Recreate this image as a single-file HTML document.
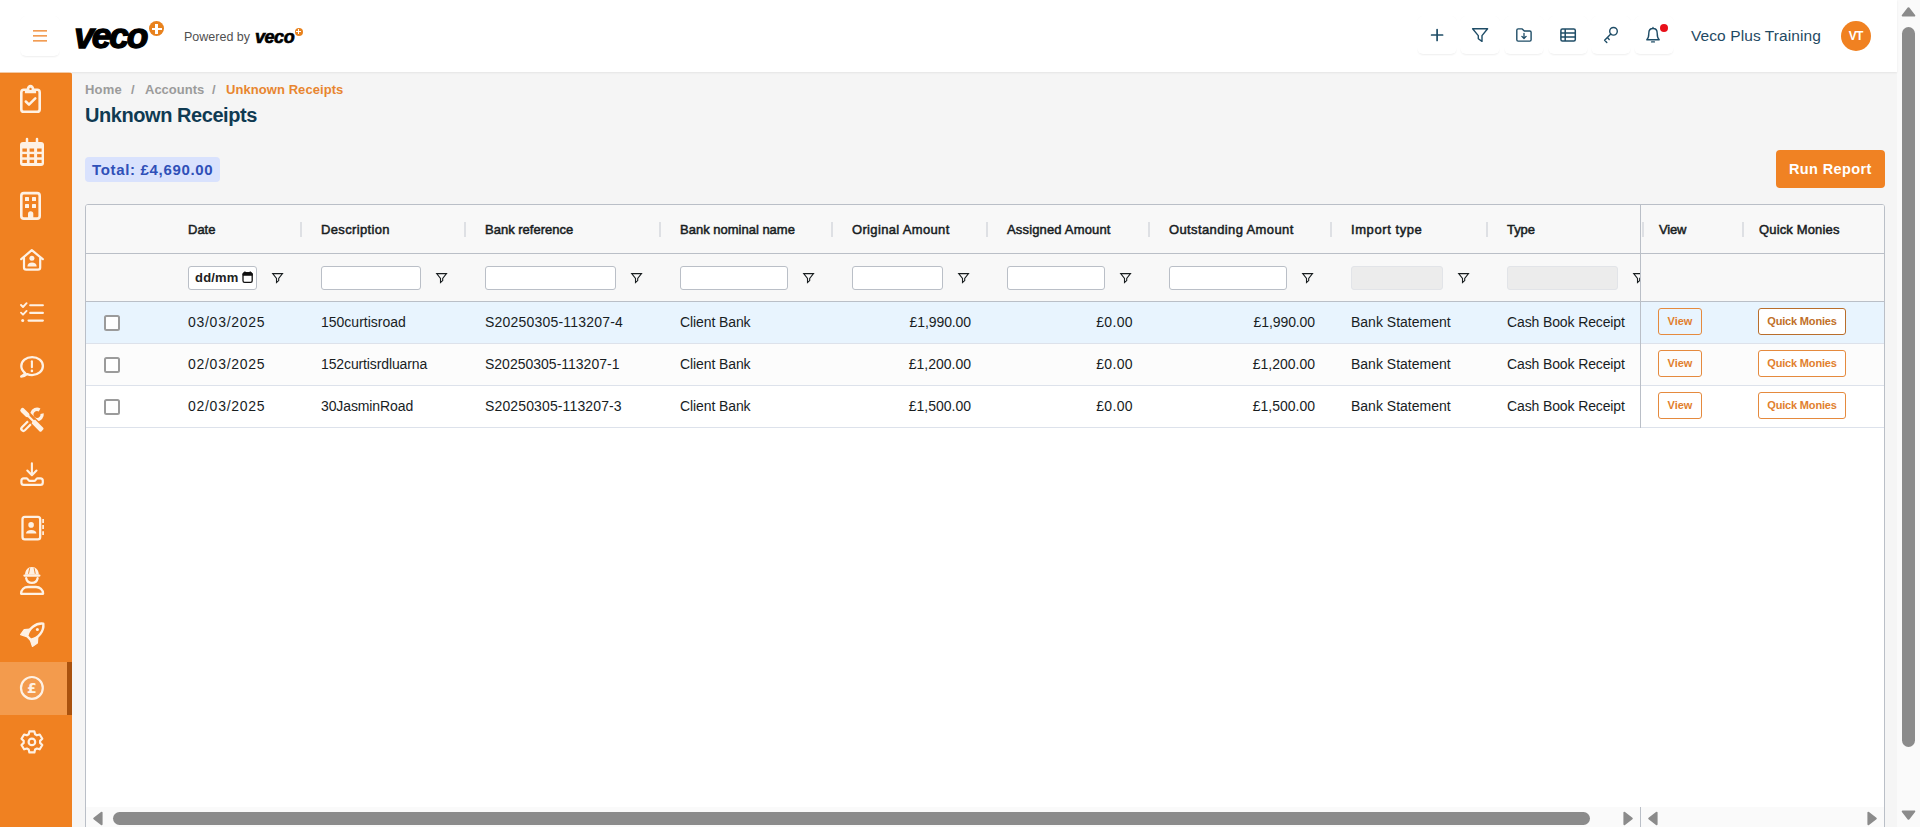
<!DOCTYPE html>
<html lang="en">
<head>
<meta charset="utf-8">
<title>Unknown Receipts</title>
<style>
*{box-sizing:border-box;margin:0;padding:0}
html,body{width:1920px;height:827px;overflow:hidden;background:#f5f5f5;font-family:"Liberation Sans",Arial,sans-serif;color:#181d1f}
#page{position:relative;width:1920px;height:827px;overflow:hidden}
#page div,#page span,#page svg{position:absolute;white-space:pre}
/* header */
#hdr{left:0;top:0;width:1897px;height:72px;background:#fff;z-index:3;box-shadow:0 1px 2px rgba(0,0,0,.07)}
.hbtn{width:40px;height:38px;top:16px;border-radius:6px;background:#fff;box-shadow:0 2px 2px -1px rgba(0,0,0,.07),0 0 1px rgba(0,0,0,.03)}
/* sidebar */
#side{left:0;top:72px;width:72px;height:755px;background:#f08121;border-top-right-radius:3px}
#side .act{left:0;top:590px;width:72px;height:53px;background:#f39b4d}
#side .bar{left:67px;top:590px;width:5px;height:53px;background:#a9520e}
/* table */
#grid{left:85px;top:204px;width:1800px;height:640px;border:1px solid #babfc7;border-radius:3px;background:#fff;overflow:hidden}
.hd{font-weight:400;-webkit-text-stroke:.5px #181d1f;font-size:13px;line-height:16px;top:17px;color:#181d1f}
.sep{width:2px;height:15px;top:17px;background:rgba(186,191,199,.42)}
.fi{top:61px;height:24px;border:1px solid #babfc7;border-radius:3px;background:#fff}
.fi.dis{background:#ececec;border-color:#e2e4e8}
.c{font-size:14px;line-height:18px;color:#181d1f}
.r{text-align:right}
.cb{width:16px;height:16px;left:18px;border:2px solid #9b9b9b;border-radius:2.5px;background:#fff}
.btn{height:27px;border:1px solid #e58a3e;border-radius:3px;font-size:11px;font-weight:700;line-height:24px;text-align:center;color:#e17f2e}
.btn.q{background:#fff;letter-spacing:-.18px}
.btn.q.hv{color:#c06f28;border-color:#b96e2c}
</style>
</head>
<body>
<div id="page">
<!-- HEADER -->
<div id="hdr">
  <div style="left:0;top:72px;width:72px;height:1px;background:rgba(255,255,255,.6)"></div>
  <div class="hbtn" style="left:20px;top:16px;width:40px;height:40px"></div>
  <svg style="left:30px;top:26px" width="20" height="20" viewBox="30 26 20 20"><path d="M33 30.9H47M33 35.8H47M33 40.9H47" stroke="#ee7d1c" stroke-width="1.2" fill="none"/></svg>
  <span id="logo" style="left:74.3px;top:15.8px;font-size:35.5px;line-height:40px;font-weight:700;font-style:italic;-webkit-text-stroke:1.3px #000;letter-spacing:-2.3px;color:#000">veco</span>
  <div style="left:149px;top:21px;width:15px;height:15px;border-radius:50%;background:#e8821e"></div>
  <div style="left:151.6px;top:27.5px;width:10px;height:2.8px;background:#fff"></div>
  <div style="left:155.2px;top:23.9px;width:2.8px;height:10px;background:#fff"></div>
  <span id="pw" style="left:184px;top:28.5px;font-size:12.5px;line-height:16px;color:#505050">Powered by</span>
  <span id="logo2" style="left:255px;top:25.5px;font-size:18px;line-height:22px;font-weight:700;font-style:italic;-webkit-text-stroke:.65px #000;letter-spacing:-.45px;color:#000">veco</span>
  <div style="left:294.8px;top:27.5px;width:8px;height:8px;border-radius:50%;background:#e8821e"></div>
  <div style="left:296.4px;top:30.9px;width:4.8px;height:1.3px;background:#fff"></div>
  <div style="left:298.15px;top:29.1px;width:1.3px;height:4.8px;background:#fff"></div>

  <div class="hbtn" style="left:1417px"></div>
  <div class="hbtn" style="left:1460px"></div>
  <div class="hbtn" style="left:1504px"></div>
  <div class="hbtn" style="left:1547.5px"></div>
  <div class="hbtn" style="left:1591px"></div>
  <div class="hbtn" style="left:1633.5px"></div>
  <svg style="left:1418px;top:16px" width="260" height="40" viewBox="1418 16 260 40" fill="none" stroke="#1f4d67" stroke-width="1.5" stroke-linecap="round" stroke-linejoin="round">
    <path d="M1431.6 35H1442.6M1437.1 29.5V40.5" stroke-width="1.7"/>
    <path d="M1472.6 28.7H1487.6L1482 35.6V41.4L1478.3 38.7V35.6Z" stroke-width="1.4"/>
    <path d="M1516.8 30.2Q1516.8 28.9 1518.1 28.9H1522.2L1524.3 31H1529.8Q1531.1 31 1531.1 32.3V39.8Q1531.1 41.1 1529.8 41.1H1518.1Q1516.8 41.1 1516.8 39.8Z" stroke-width="1.4"/>
    <path d="M1524 33.3V38.3M1521.9 36.4L1524 38.5L1526.1 36.4" stroke-width="1.3"/>
    <path d="M1560.9 30.4Q1560.9 28.9 1562.4 28.9H1573.8Q1575.3 28.9 1575.3 30.4V39.6Q1575.3 41.1 1573.8 41.1H1562.4Q1560.9 41.1 1560.9 39.6ZM1560.9 32.9H1575.3M1560.9 37H1575.3M1565.2 28.9V41.1" stroke-width="1.5"/>
    <circle cx="1613.5" cy="31.3" r="3.8" stroke-width="1.4"/>
    <path d="M1610.8 34L1604.6 40.2L1606.8 42.4M1607.4 37.6L1609.2 39.4" stroke-width="1.4"/>
    <path d="M1646.8 39.7H1659.2C1657.6 38.2 1657.2 36.6 1657.2 33.2C1657.2 30.3 1655.4 28.5 1653 28.5C1650.6 28.5 1648.8 30.3 1648.8 33.2C1648.8 36.6 1648.4 38.2 1646.8 39.7ZM1653 27.4V28.4M1651.6 41.9H1654.4" stroke-width="1.4"/>
  </svg>

  <div style="left:1660px;top:24px;width:8px;height:8px;border-radius:50%;background:#e8101a"></div>
  <span id="org" style="letter-spacing:0.09px;left:1691px;top:26px;font-size:15.5px;line-height:20px;color:#1f4a63">Veco Plus Training</span>
  <div style="left:1841px;top:21px;width:30px;height:30px;border-radius:50%;background:#f08121"></div>
  <span id="vt" style="left:1841px;top:28.8px;width:30px;text-align:center;font-size:12px;line-height:14px;font-weight:700;letter-spacing:-.6px;text-indent:-.6px;color:#fff">VT</span>
</div>
<!-- SIDEBAR -->
<div id="side">
  <div class="act"></div><div class="bar"></div>
  <svg style="left:0;top:0" width="72" height="755" viewBox="0 72 72 755" fill="none" stroke="#fef1e4" stroke-width="2.3" stroke-linecap="round" stroke-linejoin="round">
  <rect x="21.3" y="89.8" width="18.4" height="22" rx="2.6" stroke-width="2.6"/>
  <path d="M24.9 93.2V90.4Q24.9 89 26.3 89H26.7C26.9 86.4 28.5 84.8 30.5 84.8C32.5 84.8 34.1 86.4 34.3 89H34.7Q36.1 89 36.1 90.4V93.2Z" fill="#fef1e4" stroke="none"/>
  <circle cx="30.5" cy="88.9" r="1.2" fill="#f08121" stroke="none"/>
  <path d="M25.8 101.5L29 104.7L35.3 98.4" stroke-width="2.5"/>
  <rect x="20" y="142" width="24" height="24" rx="3" fill="#fef1e4" stroke="none"/>
  <path d="M27 139V143M37 139V143" stroke-width="2.5"/>
  <rect x="22.4" y="148.5" width="4.5" height="3.2" fill="#f08121" stroke="none"/>
  <rect x="22.4" y="154.1" width="4.5" height="3.2" fill="#f08121" stroke="none"/>
  <rect x="22.4" y="159.8" width="4.5" height="3.2" fill="#f08121" stroke="none"/>
  <rect x="29.6" y="148.5" width="4.5" height="3.2" fill="#f08121" stroke="none"/>
  <rect x="29.6" y="154.1" width="4.5" height="3.2" fill="#f08121" stroke="none"/>
  <rect x="29.6" y="159.8" width="4.5" height="3.2" fill="#f08121" stroke="none"/>
  <rect x="37.1" y="148.5" width="4.5" height="3.2" fill="#f08121" stroke="none"/>
  <rect x="37.1" y="154.1" width="4.5" height="3.2" fill="#f08121" stroke="none"/>
  <rect x="37.1" y="159.8" width="4.5" height="3.2" fill="#f08121" stroke="none"/>
  <rect x="21.3" y="193.1" width="18.4" height="25.5" rx="2.6" stroke-width="2.6"/>
  <rect x="25" y="196.9" width="4" height="4" rx=".5" fill="#fef1e4" stroke="none"/>
  <rect x="25" y="204.1" width="4" height="4" rx=".5" fill="#fef1e4" stroke="none"/>
  <rect x="32" y="196.9" width="4" height="4" rx=".5" fill="#fef1e4" stroke="none"/>
  <rect x="32" y="204.1" width="4" height="4" rx=".5" fill="#fef1e4" stroke="none"/>
  <path d="M28 219V213.8A2.65 2.65 0 0 1 33.3 213.8V219Z" fill="#fef1e4" stroke="none"/>
  <path d="M21.2 259.2L31.8 250.2L42.8 259.2M24 257.6V267.5Q24 269.7 26.2 269.7H38Q40.2 269.7 40.2 267.5V257.6" stroke-width="2.2"/>
  <circle cx="31.9" cy="258.3" r="2.5" fill="#fef1e4" stroke="none"/>
  <path d="M27.4 266.6C27.4 263.9 29.4 262.6 32 262.6C34.6 262.6 36.7 263.9 36.7 266.6Z" fill="#fef1e4" stroke="none"/>
  <path d="M30.2 305.3H42.9M30.2 312.9H42.9M28.5 320.6H42.9" stroke-width="2.1"/>
  <path d="M21 305L23 307L26.6 303.2M21 312.7L23 314.7L26.6 310.9" stroke-width="1.9"/>
  <circle cx="22.7" cy="320.6" r="1.5" fill="#fef1e4" stroke="none"/>
  <path d="M25.2 373.1C22.8 371.4 21.3 368.9 21.3 366.1C21.3 361.1 26.1 357.1 32.1 357.1C38.1 357.1 42.9 361.1 42.9 366.1C42.9 371.1 38.1 375.1 32.1 375.1C30.3 375.1 28.6 374.7 27.1 374.1C25.4 375.4 23.2 376.4 21.2 376.6C22.8 375.6 24.6 374.1 25.2 373.1Z" stroke-width="2.3"/>
  <path d="M31.9 361.2V367.2" stroke-width="2.1"/>
  <circle cx="31.9" cy="370.9" r="1.3" fill="#fef1e4" stroke="none"/>
  <path d="M23.4 428.8L30.2 422" stroke-width="6.4"/>
  <path d="M23.5 428.7L30.3 421.9" stroke="#f08121" stroke-width="2"/>
  <path d="M39.6 410A5.2 5.2 0 1 0 42.1 413.6" stroke-width="3.3" stroke-linecap="butt"/>
  <path d="M22.6 410.3L41 429" stroke="#f08121" stroke-width="7.5" stroke-linecap="butt"/>
  <path d="M22.6 410.3L27.2 414.9" stroke-width="4.6"/>
  <path d="M27 414.7L34 421.7" stroke-width="2.2"/>
  <path d="M32.6 421.4L35 419.6L43.2 427.8Q44 428.8 43.2 429.6L41.4 431.4Q40.6 432.2 39.6 431.4L31.6 423.2Z" fill="#fef1e4" stroke="none"/>
  <path d="M31.9 463.2V475M27.3 470.6L31.9 475.2L36.5 470.6" stroke-width="2.1"/>
  <path d="M23.8 478.3H26.6C28 478.3 28 480.9 29.6 480.9H34.4C36 480.9 36 478.3 37.4 478.3H40.4Q42.8 478.3 42.8 480.7V482.4Q42.8 484.8 40.4 484.8H23.8Q21.4 484.8 21.4 482.4V480.7Q21.4 478.3 23.8 478.3Z" stroke-width="2.2"/>
  <rect x="22.5" y="516.8" width="17.7" height="22.5" rx="2.4" stroke-width="2.3"/>
  <path d="M43.1 519.1V523M43.1 525.1V529M43.1 531.2V535" stroke-width="1.7" stroke-linecap="butt"/>
  <circle cx="31.1" cy="524.9" r="2.8" fill="#fef1e4" stroke="none"/>
  <path d="M26 533.6C26 531.2 28 530 31.2 530C34.4 530 36.4 531.2 36.4 533.6Z" fill="#fef1e4" stroke="none"/>
  <path d="M25 574.8C25 570.2 27.8 567 31.9 567C36 567 38.8 570.2 38.8 574.8Z" fill="#fef1e4" stroke="none"/>
  <path d="M29.6 568.6L28.6 573.4M34.2 568.6L35.2 573.4" stroke="#f08121" stroke-width=".9"/>
  <path d="M24.4 575.6H39.4" stroke-width="2.2"/>
  <path d="M26.2 578.2A5.8 5.8 0 0 0 37.6 578.2" stroke-width="2.3"/>
  <path d="M21.1 593.8C21.1 589.6 24.2 587 28 587H36C39.8 587 43.1 589.6 43.1 593.8Z" stroke-width="2.3"/>
  <path d="M43.3 623.6C35.6 622.8 28.6 628.6 27.2 636.2L30.8 639.8C38.4 638.4 44.2 631.4 43.3 623.6Z" stroke-width="2.4"/>
  <circle cx="37.4" cy="629.5" r="1.5" fill="#fef1e4" stroke="none"/>
  <path d="M30 629.2L24.2 629.6L20.6 634.6L26.6 636.6Z" fill="#fef1e4" stroke="#fef1e4" stroke-width="1.2"/>
  <path d="M37.8 637.2L37.4 643L32.4 646.4L30.4 640.4Z" fill="#fef1e4" stroke="#fef1e4" stroke-width="1.2"/>
  <circle cx="31.9" cy="687.9" r="10.9" stroke-width="2.2"/>
  <text x="31.9" y="692.9" text-anchor="middle" font-family="DejaVu Sans,Liberation Sans,sans-serif" font-size="14" font-weight="700" fill="#fef1e4" stroke="none">£</text>
  <path d="M35.1 734.3L34.4 731.4L29.4 731.4L28.7 734.3L26.9 735.3L24.1 734.5L21.5 738.8L23.7 740.9L23.7 742.9L21.5 745.0L24.1 749.3L26.9 748.5L28.7 749.5L29.4 752.4L34.4 752.4L35.1 749.5L36.9 748.5L39.7 749.3L42.3 745.0L40.1 742.9L40.1 740.9L42.3 738.8L39.7 734.5L36.9 735.3Z" stroke-width="2.2"/>
  <circle cx="31.9" cy="741.9" r="3.3" stroke-width="2.2"/>
  </svg>
</div>
<!-- MAIN -->
<span id="bc1" style="letter-spacing:0.20px;margin-top:.5px;left:85px;top:81px;font-size:13px;line-height:16px;font-weight:700;color:#9b9b9b">Home</span>
<span id="bcs1" style="margin-top:.5px;left:131px;top:81px;font-size:13px;line-height:16px;font-weight:700;color:#9b9b9b">/</span>
<span id="bc2" style="margin-top:.5px;left:145px;top:81px;font-size:13px;line-height:16px;font-weight:700;color:#9b9b9b">Accounts</span>
<span id="bcs2" style="margin-top:.5px;left:212px;top:81px;font-size:13px;line-height:16px;font-weight:700;color:#9b9b9b">/</span>
<span id="bc3" style="letter-spacing:0.07px;margin-top:.5px;left:226px;top:81px;font-size:13px;line-height:16px;font-weight:700;color:#e8852f">Unknown Receipts</span>
<span id="ttl" style="letter-spacing:-0.44px;left:85px;top:103px;font-size:20px;line-height:24px;font-weight:700;color:#0f3a52">Unknown Receipts</span>
<div style="left:85px;top:157px;width:135px;height:25px;border-radius:4px;background:#d9e2fd"></div>
<span id="tot" style="letter-spacing:0.67px;left:92px;top:160px;font-size:15px;line-height:19px;font-weight:700;color:#2f50b8">Total: £4,690.00</span>
<div style="left:1776px;top:150px;width:109px;height:38px;border-radius:4px;background:#f08223"></div>
<span id="rr" style="letter-spacing:0.37px;left:1789px;top:159.5px;font-size:14.5px;line-height:19px;font-weight:700;color:#fff">Run Report</span>

<!-- GRID -->
<div id="grid">
  <div style="left:0;top:0;width:1798px;height:96px;background:#f8f8f8"></div>
  <div style="left:0;top:48px;width:1798px;height:1px;background:#babfc7"></div>
  <div style="left:0;top:96px;width:1798px;height:1px;background:#babfc7"></div>
  <div style="left:0;top:97px;width:1798px;height:41px;background:#e8f4fe"></div>
  <div style="left:0;top:138px;width:1798px;height:1px;background:#dde2eb"></div>
  <div style="left:0;top:139px;width:1798px;height:41px;background:#fcfcfc"></div>
  <div style="left:0;top:180px;width:1798px;height:1px;background:#dde2eb"></div>
  <div style="left:0;top:181px;width:1798px;height:41px;background:#ffffff"></div>
  <div style="left:0;top:222px;width:1798px;height:1px;background:#dde2eb"></div>
  <span class="hd" id="h0" style="left:102px">Date</span>
  <span class="hd" id="h1" style="letter-spacing:0.34px;left:235px">Description</span>
  <span class="hd" id="h2" style="left:399px">Bank reference</span>
  <span class="hd" id="h3" style="left:594px">Bank nominal name</span>
  <span class="hd" id="h4" style="letter-spacing:0.34px;left:766px">Original Amount</span>
  <span class="hd" id="h5" style="letter-spacing:0.16px;left:921px">Assigned Amount</span>
  <span class="hd" id="h6" style="letter-spacing:0.38px;left:1083px">Outstanding Amount</span>
  <span class="hd" id="h7" style="letter-spacing:0.58px;left:1265px">Import type</span>
  <span class="hd" id="h8" style="letter-spacing:-0.07px;left:1421px">Type</span>
  <div class="sep" style="left:214px"></div>
  <div class="sep" style="left:378px"></div>
  <div class="sep" style="left:573px"></div>
  <div class="sep" style="left:745px"></div>
  <div class="sep" style="left:900px"></div>
  <div class="sep" style="left:1062px"></div>
  <div class="sep" style="left:1244px"></div>
  <div class="sep" style="left:1400px"></div>
  <div class="sep" style="left:1556px"></div>
  <div class="sep" style="left:1656px"></div>
  <div class="fi" style="left:102px;width:69px"></div>
  <div class="fi" style="left:235px;width:100px"></div>
  <div class="fi" style="left:399px;width:131px"></div>
  <div class="fi" style="left:594px;width:108px"></div>
  <div class="fi" style="left:766px;width:91px"></div>
  <div class="fi" style="left:921px;width:98px"></div>
  <div class="fi" style="left:1083px;width:118px"></div>
  <div class="fi dis" style="left:1265px;width:92px"></div>
  <div class="fi dis" style="left:1421px;width:111px"></div>
  <span id="ddmm" style="letter-spacing:0.20px;left:109px;top:65px;font-size:13px;line-height:16px;font-weight:700;color:#222">dd/mm</span>
  <svg style="left:0;top:49px" width="1554" height="47" viewBox="86 254 1554 47" fill="none" stroke="#181d1f" stroke-width="1.1" stroke-linejoin="miter">
  <path d="M272.7 273.6H282.5L278.7 278.4V280.6L276.5 282.5V278.4Z"/>
  <path d="M436.7 273.6H446.5L442.7 278.4V280.6L440.5 282.5V278.4Z"/>
  <path d="M631.7 273.6H641.5L637.7 278.4V280.6L635.5 282.5V278.4Z"/>
  <path d="M803.7 273.6H813.5L809.7 278.4V280.6L807.5 282.5V278.4Z"/>
  <path d="M958.7 273.6H968.5L964.7 278.4V280.6L962.5 282.5V278.4Z"/>
  <path d="M1120.7 273.6H1130.5L1126.7 278.4V280.6L1124.5 282.5V278.4Z"/>
  <path d="M1302.7 273.6H1312.5L1308.7 278.4V280.6L1306.5 282.5V278.4Z"/>
  <path d="M1458.7 273.6H1468.5L1464.7 278.4V280.6L1462.5 282.5V278.4Z"/>
  <path d="M1633.7 273.6H1643.5L1639.7 278.4V280.6L1637.5 282.5V278.4Z"/>
  <rect x="243" y="273.2" width="9.2" height="9.2" rx="1.6" stroke-width="1.3" stroke="#111"/>
  <path d="M243 275.2V274Q243 272.6 244.4 272.6H250.8Q252.2 272.6 252.2 274V275.2Z" fill="#111" stroke="#111" stroke-width="1"/>
  <path d="M244.9 271.4V273M250.3 271.4V273" stroke="#111" stroke-width="1.4"/>
  </svg>
  <div class="cb" style="top:110px"></div>
  <span class="c" id="r0c0" style="letter-spacing:0.72px;left:102px;top:108px">03/03/2025</span>
  <span class="c" id="r0c1" style="left:235px;top:108px">150curtisroad</span>
  <span class="c" id="r0c2" style="letter-spacing:0.20px;left:399px;top:108px">S20250305-113207-4</span>
  <span class="c" id="r0c3" style="letter-spacing:-0.10px;left:594px;top:108px">Client Bank</span>
  <span class="c r" id="r0c4" style="letter-spacing:-0.10px;right:913px;top:108px">£1,990.00</span>
  <span class="c r" id="r0c5" style="letter-spacing:0.35px;right:751px;top:108px">£0.00</span>
  <span class="c r" id="r0c6" style="letter-spacing:-0.10px;right:569px;top:108px">£1,990.00</span>
  <span class="c" id="r0c7" style="left:1265px;top:108px">Bank Statement</span>
  <span class="c" id="r0c8" style="letter-spacing:-0.12px;left:1421px;top:108px">Cash Book Receipt</span>
  <div class="cb" style="top:152px"></div>
  <span class="c" id="r1c0" style="letter-spacing:0.72px;left:102px;top:150px">02/03/2025</span>
  <span class="c" id="r1c1" style="letter-spacing:-0.12px;left:235px;top:150px">152curtisrdluarna</span>
  <span class="c" id="r1c2" style="left:399px;top:150px">S20250305-113207-1</span>
  <span class="c" id="r1c3" style="letter-spacing:-0.10px;left:594px;top:150px">Client Bank</span>
  <span class="c r" id="r1c4" style="right:913px;top:150px">£1,200.00</span>
  <span class="c r" id="r1c5" style="letter-spacing:0.35px;right:751px;top:150px">£0.00</span>
  <span class="c r" id="r1c6" style="right:569px;top:150px">£1,200.00</span>
  <span class="c" id="r1c7" style="left:1265px;top:150px">Bank Statement</span>
  <span class="c" id="r1c8" style="letter-spacing:-0.12px;left:1421px;top:150px">Cash Book Receipt</span>
  <div class="cb" style="top:194px"></div>
  <span class="c" id="r2c0" style="letter-spacing:0.72px;left:102px;top:192px">02/03/2025</span>
  <span class="c" id="r2c1" style="letter-spacing:-0.11px;left:235px;top:192px">30JasminRoad</span>
  <span class="c" id="r2c2" style="letter-spacing:0.13px;left:399px;top:192px">S20250305-113207-3</span>
  <span class="c" id="r2c3" style="letter-spacing:-0.10px;left:594px;top:192px">Client Bank</span>
  <span class="c r" id="r2c4" style="right:913px;top:192px">£1,500.00</span>
  <span class="c r" id="r2c5" style="letter-spacing:0.35px;right:751px;top:192px">£0.00</span>
  <span class="c r" id="r2c6" style="right:569px;top:192px">£1,500.00</span>
  <span class="c" id="r2c7" style="left:1265px;top:192px">Bank Statement</span>
  <span class="c" id="r2c8" style="letter-spacing:-0.12px;left:1421px;top:192px">Cash Book Receipt</span>
  <div style="left:1554px;top:0;width:244px;height:96px;background:#f8f8f8"></div>
  <div style="left:1554px;top:48px;width:244px;height:1px;background:#babfc7"></div>
  <div style="left:1554px;top:96px;width:244px;height:1px;background:#babfc7"></div>
  <div style="left:1554px;top:0;width:1px;height:223px;background:#babfc7"></div>
  <div class="btn" id="vb0" style="left:1572px;top:103px;width:44px">View</div>
  <div class="btn q hv" id="qb0" style="left:1672px;top:103px;width:88px">Quick Monies</div>
  <div class="btn" id="vb1" style="left:1572px;top:145px;width:44px">View</div>
  <div class="btn q" id="qb1" style="left:1672px;top:145px;width:88px">Quick Monies</div>
  <div class="btn" id="vb2" style="left:1572px;top:187px;width:44px">View</div>
  <div class="btn q" id="qb2" style="left:1672px;top:187px;width:88px">Quick Monies</div>
  <span class="hd" id="h9" style="letter-spacing:-0.20px;left:1573px">View</span>
  <span class="hd" id="h10" style="letter-spacing:0.15px;left:1673px">Quick Monies</span>
  <div class="sep" style="left:1556px"></div>
  <div class="sep" style="left:1656px"></div>
  <div style="left:0;top:602px;width:1798px;height:30px;background:#fafafa"></div>
  <div style="left:1554px;top:602px;width:1px;height:30px;background:#babfc7"></div>
  <div style="left:27px;top:607px;width:1477px;height:13px;border-radius:6.5px;background:#8b8b8b"></div>
  <svg style="left:6px;top:606px" width="11" height="15" viewBox="0 0 11 15"><path d="M2.2 7.5L9.6 1.7V13.3Z" fill="#8b8b8b" stroke="#8b8b8b" stroke-width="2" stroke-linejoin="round"/></svg>
  <svg style="left:1537px;top:606px" width="11" height="15" viewBox="0 0 11 15"><path d="M8.8 7.5L1.4 1.7V13.3Z" fill="#8b8b8b" stroke="#8b8b8b" stroke-width="2" stroke-linejoin="round"/></svg>
  <svg style="left:1561px;top:606px" width="11" height="15" viewBox="0 0 11 15"><path d="M2.2 7.5L9.6 1.7V13.3Z" fill="#8b8b8b" stroke="#8b8b8b" stroke-width="2" stroke-linejoin="round"/></svg>
  <svg style="left:1781px;top:606px" width="11" height="15" viewBox="0 0 11 15"><path d="M8.8 7.5L1.4 1.7V13.3Z" fill="#8b8b8b" stroke="#8b8b8b" stroke-width="2" stroke-linejoin="round"/></svg>
</div>
<!-- page scrollbar -->
<div style="left:1897px;top:0;width:23px;height:827px;background:#fafafa"></div>
<div style="left:1902px;top:27px;width:13px;height:720px;border-radius:6.5px;background:#8b8b8b"></div>
<svg style="left:1901px;top:6px" width="15" height="11" viewBox="0 0 15 11"><path d="M7.5 2.2L13.3 9.6H1.7Z" fill="#8b8b8b" stroke="#8b8b8b" stroke-width="2" stroke-linejoin="round"/></svg>
<svg style="left:1901px;top:810px" width="15" height="11" viewBox="0 0 15 11"><path d="M7.5 8.8L13.3 1.4H1.7Z" fill="#8b8b8b" stroke="#8b8b8b" stroke-width="2" stroke-linejoin="round"/></svg>
</div>
</body>
</html>
